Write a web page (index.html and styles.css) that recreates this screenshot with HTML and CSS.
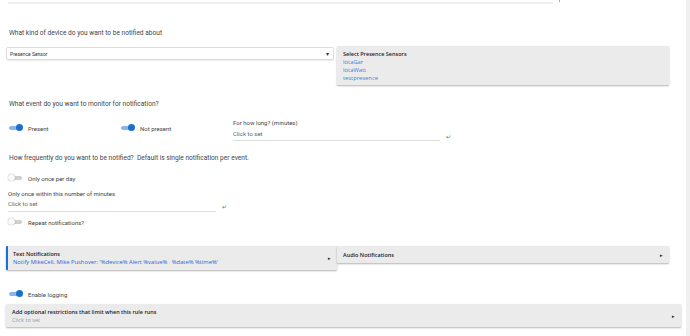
FILE: index.html
```html
<!DOCTYPE html>
<html lang="en">
<head>
    <meta charset="UTF-8">
    <title>Notifications rule</title>
    <link rel="stylesheet" href="styles.css">
</head>
<body>
    <div class="page">
        <div class="top-row">
            <div class="top-line"></div>
            <span class="top-mark"></span>
        </div>

        <p class="question q-device">What kind of device do you want to be notified about</p>

        <div class="device-row">
            <div class="select">
                <span>Presence Sensor</span>
                <span class="caret">&#9662;</span>
            </div>
            <div class="box sensors">
                <div class="box-title">Select Presence Sensors</div>
                <a class="link">IotaGar</a>
                <a class="link">IotaWatt</a>
                <a class="link">testpresence</a>
            </div>
        </div>

        <p class="question q-event">What event do you want to monitor for notification?</p>

        <div class="event-row">
            <label class="toggle-item present"><span class="switch on"></span>Present</label>
            <label class="toggle-item not-present"><span class="switch on"></span>Not present</label>
            <div class="field how-long">
                <div class="field-label">For how long? (minutes)</div>
                <div class="field-input">Click to set</div>
            </div>
            <span class="enter">&#8629;</span>
        </div>

        <p class="question q-freq">How frequently do you want to be notified?&nbsp; Default is single notification per event.</p>

        <label class="toggle-item once-day"><span class="switch"></span>Only once per day</label>

        <div class="field-row minutes">
            <div class="field">
                <div class="field-label">Only once within this number of minutes</div>
                <div class="field-input">Click to set</div>
            </div>
            <span class="enter">&#8629;</span>
        </div>

        <label class="toggle-item repeat"><span class="switch"></span>Repeat notifications?</label>

        <div class="notify-row">
            <div class="box expander text-notif">
                <div>
                    <div class="box-title">Text Notifications</div>
                    <div class="notify-text">Notify MikeCell, Mike Pushover: '%device% Alert %value% &nbsp; %date% %time%'</div>
                </div>
                <span class="arrow">&#9656;</span>
            </div>
            <div class="box expander audio-notif">
                <div class="box-title">Audio Notifications</div>
                <span class="arrow">&#9656;</span>
            </div>
        </div>

        <label class="toggle-item logging"><span class="switch on"></span>Enable logging</label>

        <div class="box expander restrictions">
            <div>
                <div class="box-title">Add optional restrictions that limit when this rule runs</div>
                <div class="hint">Click to set</div>
            </div>
            <span class="arrow">&#9656;</span>
        </div>
    </div>
</body>
</html>
```

FILE: styles.css
```css
body {
    margin: 0;
    font-family: Roboto, "Noto Sans", sans-serif;
    color: #444;
    background: #fff;
}
.page {
    width: 690px;
    height: 336px;
    border-right: 4px solid #f0f0f0;
    padding-left: 6px;
    box-sizing: border-box;
    overflow: hidden;
}
.top-row {
    display: flex;
    align-items: flex-start;
    height: 4px;
}
.top-line {
    margin: 2px 0 0 2px;
    width: 545px;
    border-top: 2px solid #eee;
}
.top-mark {
    margin-left: 6px;
    width: 1px;
    height: 2px;
    background: #aaa;
}
.question {
    margin: 0;
    font-size: 6.6px;
    line-height: 8px;
    padding-left: 3px;
    color: #444;
}
.q-device { margin-top: 25px; }
.q-event { margin-top: 15px; }
.q-freq { margin-top: 13px; }

.device-row {
    display: grid;
    grid-template-columns: 328px 332px;
    gap: 3px;
    margin-top: 9px;
    align-items: start;
}
.select {
    height: 11px;
    margin-top: 1px;
    border: 1px solid #ddd;
    border-radius: 2px;
    box-shadow: 0 1px 1px rgba(0, 0, 0, 0.08);
    display: flex;
    align-items: center;
    justify-content: space-between;
    padding: 0 4px 0 3px;
    font-size: 5px;
    color: #333;
}
.caret {
    font-size: 6px;
    color: #333;
}
.box {
    background: #ebebeb;
    box-shadow: 0 1px 2px rgba(0, 0, 0, 0.3);
    border-radius: 1px;
    font-family: "Open Sans", "Noto Sans", sans-serif;
    font-size: 5.6px;
    line-height: 8px;
}
.sensors {
    padding: 4px 6px 3px;
    height: 39px;
    box-sizing: border-box;
}
.box-title {
    color: #222;
    font-weight: 600;
    font-size: 5.5px;
}
.link {
    display: block;
    color: #3b7fd4;
    font-size: 5.8px;
}

.toggle-item {
    display: flex;
    align-items: center;
    font-size: 6px;
    color: #444;
    height: 10px;
}
.switch {
    position: relative;
    width: 13px;
    height: 4px;
    margin: 0 6px 0 3px;
    border-radius: 2px;
    background: #cfcfcf;
}
.switch::after {
    content: "";
    position: absolute;
    top: -2px;
    left: -1px;
    width: 7px;
    height: 7px;
    border-radius: 50%;
    background: #fafafa;
    box-shadow: 0 0 1px rgba(0, 0, 0, 0.5);
}
.switch.on {
    background: #8db6e6;
}
.switch.on::after {
    left: 7px;
    background: #1b6fcf;
    box-shadow: none;
}

.event-row {
    display: flex;
    align-items: flex-start;
    margin-top: 11px;
}
.event-row .toggle-item {
    margin-top: 4px;
}
.present { width: 112px; }
.not-present { width: 112px; }
.field {
    font-size: 6px;
    line-height: 8px;
}
.how-long {
    width: 207px;
    margin-left: 3px;
}
.field-label {
    color: #444;
}
.field-input {
    color: #666;
    padding: 3px 0 2px;
    border-bottom: 1px solid #ddd;
}
.enter {
    font-size: 6px;
    line-height: 8px;
    color: #777;
    margin: 14px 0 0 6px;
}

.once-day { margin-top: 11px; }
.minutes {
    display: flex;
    align-items: flex-start;
    margin-top: 7px;
    padding-left: 2px;
}
.minutes .field { width: 208px; }
.minutes .field-input { padding: 2px 0 3px; }
.minutes .enter { margin-top: 13px; }
.repeat { margin-top: 5px; }

.notify-row {
    display: grid;
    grid-template-columns: 331px 332px;
    align-items: start;
    margin-top: 19px;
}
.expander {
    display: flex;
    justify-content: space-between;
    align-items: center;
    padding: 0 6px;
    box-sizing: border-box;
}
.text-notif {
    height: 24px;
    border-left: 2px solid #1a6fe0;
    padding-left: 5px;
}
.audio-notif {
    height: 17px;
}
.notify-text {
    color: #2f5fd6;
    font-size: 5.8px;
}
.arrow {
    font-size: 5px;
    color: #222;
}
.logging { margin-top: 19px; }
.restrictions {
    width: 675px;
    height: 23px;
    margin-top: 5px;
}
.hint {
    color: #999;
}
```
